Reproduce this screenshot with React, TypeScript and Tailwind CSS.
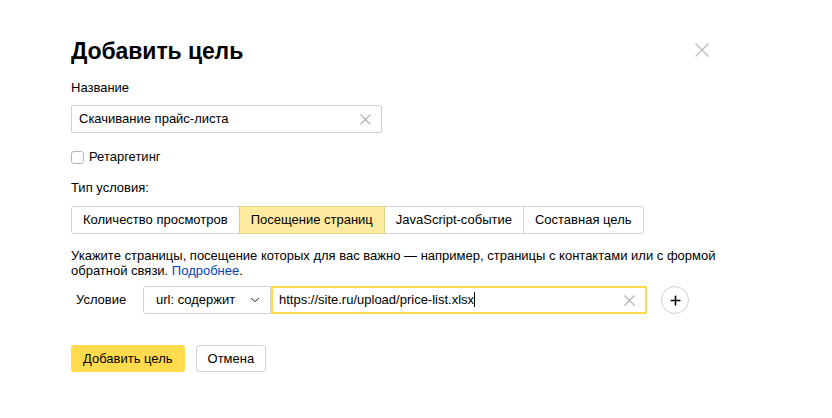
import { ChevronDown, Plus } from 'lucide-react'

const TABS = ['Количество просмотров', 'Посещение страниц', 'JavaScript-событие', 'Составная цель']

function Cross({ size, className, width = 1.2 }: { size: number; className?: string; width?: number }) {
  return (
    <svg width={size} height={size} viewBox={`0 0 ${size} ${size}`} className={className} fill="none" stroke="currentColor" strokeWidth={width}>
      <path d={`M0.5 0.5L${size - 0.5} ${size - 0.5}M${size - 0.5} 0.5L0.5 ${size - 0.5}`} />
    </svg>
  )
}

export default function App() {
  return (
    <div className="w-[832px] h-[418px] bg-white text-black text-[13px] leading-[16px] font-['Liberation_Sans',Arial,sans-serif]">
      <div className="relative pl-[71px] pt-[37px]">
        {/* закрыть */}
        <button className="absolute left-[695px] top-[43px] text-[#c2c2c2]">
          <Cross size={14} width={1.5} />
        </button>

        <h1 className="text-[23px] leading-[29px] font-bold tracking-[-0.1px]">Добавить цель</h1>

        <div className="mt-[14px]">Название</div>
        <div className="mt-[9px] w-[311px] h-[28px] border border-[#d0d0d0] rounded-[2px] flex items-center pl-[7px] pr-[10px]">
          <span className="flex-1">Скачивание прайс-листа</span>
          <Cross size={11} className="text-[#b3b3b3]" />
        </div>

        <label className="mt-[16px] flex items-center gap-[5px]">
          <span className="w-[13px] h-[13px] border border-[#b8b8b8] rounded-[3px]" />
          <span>Ретаргетинг</span>
        </label>

        <div className="mt-[15px]">Тип условия:</div>
        <div className="mt-[10px] flex h-[28px]">
          {TABS.map((t, i) => (
            <div
              key={t}
              className={
                'h-full flex items-center px-[11px] border border-[#d3d3d3] ' +
                (i === 0 ? 'rounded-l-[3px] ' : '-ml-px ') +
                (i === TABS.length - 1 ? 'rounded-r-[3px] ' : '') +
                (i === 1 ? 'bg-[#ffeba0] border-[#e2cf86] relative z-10' : 'bg-white')
              }
            >
              {t}
            </div>
          ))}
        </div>

        <p className="mt-[14px] w-[680px] leading-[15px]">
          Укажите страницы, посещение которых для вас важно — например, страницы с контактами или с формой обратной связи. <a className="text-[#0044bb]">Подробнее</a>.
        </p>

        <div className="mt-[8px] flex items-center h-[28px]">
          <span className="w-[72px] pl-[5px]">Условие</span>
          <div className="h-full w-[128px] border border-[#d3d3d3] rounded-l-[3px] flex items-center pl-[12px] pr-[8px]">
            <span className="flex-1">url: содержит</span>
            <ChevronDown size={14} strokeWidth={1.6} />
          </div>
          <div className="h-full w-[376px] border-2 border-[#ffdb4d] flex items-center pl-[6px] pr-[10px]">
            <span className="flex-1">
              https://site.ru/upload/price-list.xlsx
              <span className="inline-block w-px h-[15px] bg-black align-middle -mt-[2px]" />
            </span>
            <Cross size={11} className="text-[#b3b3b3]" />
          </div>
          <div className="ml-[14px] w-[28px] h-[28px] rounded-full border border-[#d0d0d0] flex items-center justify-center">
            <Plus size={15} strokeWidth={2.4} />
          </div>
        </div>

        <div className="mt-[31px] flex gap-[11px]">
          <button className="h-[27px] px-[12px] rounded-[3px] bg-[#ffdb4d]">Добавить цель</button>
          <button className="h-[27px] px-[11px] rounded-[3px] border border-[#d3d3d3] bg-white">Отмена</button>
        </div>
      </div>
    </div>
  )
}
